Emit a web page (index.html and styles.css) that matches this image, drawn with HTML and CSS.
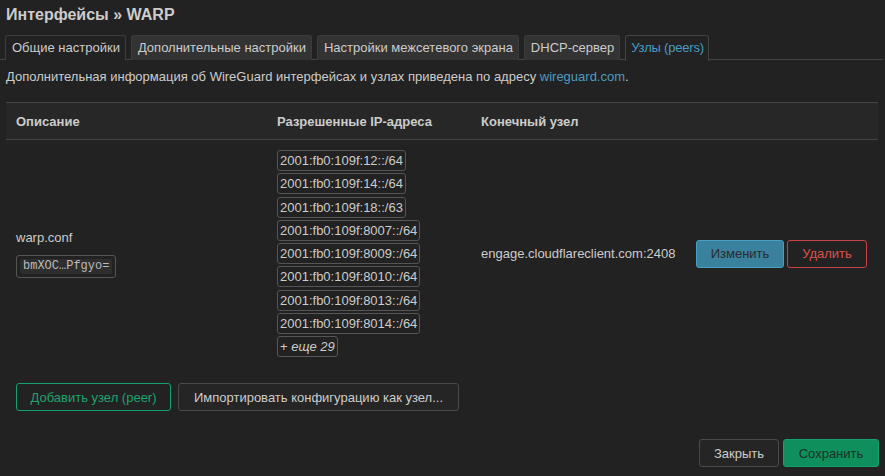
FILE: index.html
```html
<!DOCTYPE html>
<html lang="ru">
<head>
<meta charset="utf-8">
<title>Интерфейсы » WARP</title>
<link rel="stylesheet" href="styles.css">
</head>
<body>
<div class="page">
  <h2 class="title">Интерфейсы » WARP</h2>
  <ul class="tabs">
    <li class="tab tab-plain">Общие настройки</li>
    <li class="tab">Дополнительные настройки</li>
    <li class="tab">Настройки межсетевого экрана</li>
    <li class="tab">DHCP-сервер</li>
    <li class="tab tab-active">Узлы (peers)</li>
  </ul>
  <p class="info">Дополнительная информация об WireGuard интерфейсах и узлах приведена по адресу <a class="link" href="#">wireguard.com</a>.</p>
  <div class="table">
    <div class="row head">
      <div class="cell">Описание</div>
      <div class="cell">Разрешенные IP-адреса</div>
      <div class="cell">Конечный узел</div>
      <div class="cell"></div>
    </div>
    <div class="row body">
      <div class="cell desc">
        <div class="name">warp.conf</div>
        <div class="key"><code>bmXOC…Pfgyo=</code></div>
      </div>
      <div class="cell ips">
        <span class="ip">2001:fb0:109f:12::/64</span>
        <span class="ip">2001:fb0:109f:14::/64</span>
        <span class="ip">2001:fb0:109f:18::/63</span>
        <span class="ip">2001:fb0:109f:8007::/64</span>
        <span class="ip">2001:fb0:109f:8009::/64</span>
        <span class="ip">2001:fb0:109f:8010::/64</span>
        <span class="ip">2001:fb0:109f:8013::/64</span>
        <span class="ip">2001:fb0:109f:8014::/64</span>
        <span class="ip more">+ <em>еще 29</em></span>
      </div>
      <div class="cell endpoint">engage.cloudflareclient.com:2408</div>
      <div class="cell actions">
        <button class="btn btn-edit">Изменить</button>
        <button class="btn btn-del">Удалить</button>
      </div>
    </div>
  </div>
  <div class="add-row">
    <button class="btn btn-add">Добавить узел (peer)</button>
    <button class="btn btn-import">Импортировать конфигурацию как узел...</button>
  </div>
  <div class="footer">
    <button class="btn btn-close">Закрыть</button>
    <button class="btn btn-save">Сохранить</button>
  </div>
</div>
</body>
</html>
```

FILE: styles.css
```css
* { box-sizing: border-box; }
html, body {
  margin: 0;
  padding: 0;
  background: #222222;
  color: #cccccc;
  font-family: "Liberation Sans", Arial, sans-serif;
  font-size: 13px;
}
.page {
  width: 885px;
  height: 476px;
  overflow: hidden;
  padding-top: 3px;
}
.title {
  margin: 0 0 0 6px;
  font-size: 16px;
  font-weight: bold;
  line-height: 24px;
  color: #cccccc;
}
.tabs {
  list-style: none;
  margin: 8px 2px 0 0;
  padding: 0 0 0 5px;
  display: flex;
  gap: 5px;
  border-bottom: 1px solid #444444;
  height: 25px;
}
.tab {
  height: 25px;
  padding: 0 5px 0 6px;
  line-height: 23px;
  border: 1px solid #3c3c3c;
  border-bottom: none;
  border-radius: 3px 3px 0 0;
  background: #333333;
  color: #cccccc;
  white-space: nowrap;
}
.tab-plain { background: #222222; }
.tab-active {
  background: #222222;
  color: #4a9cc0;
  border-color: #444444;
  margin-bottom: -1px;
  height: 26px;
  padding: 0 4px 0 5px;
  letter-spacing: -0.2px;
}
.info {
  margin: 0 0 0 6px;
  line-height: 33px;
  height: 42px;
}
.link { color: #4a9cc0; text-decoration: none; }
.table {
  margin-left: 6px;
  width: 872px;
}
.row {
  display: grid;
  grid-template-columns: 261px 204px 215px 1fr;
}
.head {
  background: #272727;
  border-top: 1px solid #444444;
  border-bottom: 1px solid #444444;
  height: 38px;
  font-weight: bold;
  align-items: center;
}
.cell { padding: 0 10px; }
.body {
  align-items: center;
  padding: 10px 0;
}
.name { line-height: 16px; }
.key {
  margin-top: 9px;
  display: inline-block;
  border: 1px solid #555555;
  border-radius: 3px;
  padding: 3px 3px;
}
.key code {
  display: block;
  background: #2e2e2e;
  border-radius: 2px;
  padding: 0 3px;
  font-family: "Liberation Mono", "Courier New", monospace;
  font-size: 12px;
  line-height: 15px;
  color: #bbbbbb;
}
.ips {
  display: flex;
  flex-direction: column;
  align-items: flex-start;
  gap: 2.25px;
}
.ip {
  display: block;
  height: 21px;
  line-height: 19px;
  padding: 0 2px;
  border: 1px solid #555555;
  border-radius: 3px;
  white-space: nowrap;
}
.more em { font-style: italic; }
.actions {
  display: flex;
  gap: 3px;
  padding-left: 10px;
}
.btn {
  font-family: "Liberation Sans", Arial, sans-serif;
  font-size: 13px;
  height: 28px;
  border-radius: 3px;
  border: 1px solid #555555;
  background: #252525;
  color: #cccccc;
  padding: 0 12px;
  cursor: pointer;
}
.btn-edit {
  width: 88px;
  background: #3a819d;
  border-color: #4aa0c2;
  color: #2b2b2b;
}
.btn-del {
  width: 80px;
  background: #222222;
  border-color: #c64444;
  color: #d9534f;
}
.add-row {
  display: flex;
  gap: 7px;
  margin: 16px 0 0 16px;
}
.btn-add {
  width: 155px;
  border-color: #14a06a;
  color: #1fa36c;
  background: #222222;
}
.btn-import {
  width: 281px;
  background: #252525;
  border-color: #4a4a4a;
}
.footer {
  display: flex;
  justify-content: flex-end;
  gap: 4px;
  margin: 28px 6px 0 0;
}
.btn-close {
  width: 80px;
  background: #252525;
  border-color: #4a4a4a;
}
.btn-save {
  width: 96px;
  background: #0e8f5b;
  border-color: #14a06a;
  color: #1f2f27;
}
```
